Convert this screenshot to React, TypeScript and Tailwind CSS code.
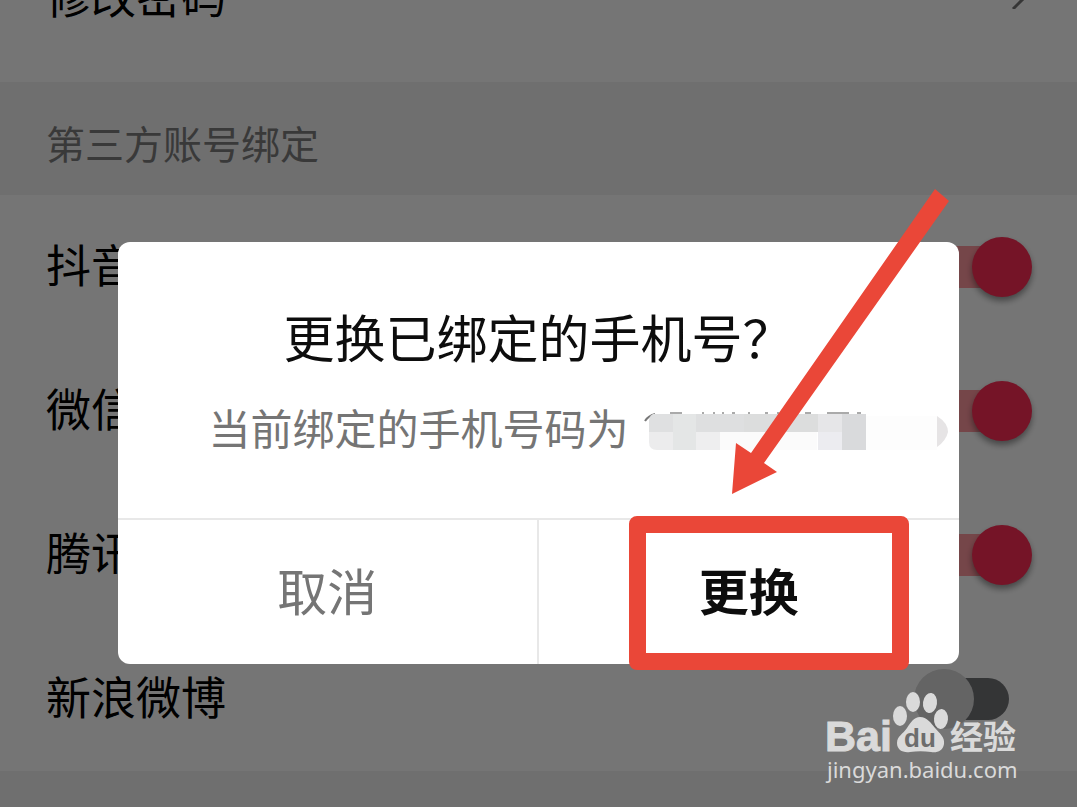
import { useState } from 'react';

// --- DATA ---
const accounts = [
  { id: 'douyin', name: '抖音', bound: true },
  { id: 'wechat', name: '微信', bound: true },
  { id: 'tencent', name: '腾讯', bound: true },
  { id: 'weibo', name: '新浪微博', bound: false },
];

// Pixelated blocks hiding the phone number
const MaskedNumber = () => (
  <svg className="w-[240px] h-[42px] overflow-visible shrink-0" viewBox="2 -3 240 42" aria-hidden="true">
    <path d="M18 12Q21 7 28 5" stroke="#777" strokeWidth="2" fill="none" />
    <path d="M43 4h12 M75 4h2 M86 4h2 M95 4h2 M105 4h3 M121 4h2 M138 4h3 M150 4h2 M163 4h3 M178 4h6 M200 4h22 M230 4h4" stroke="#aaa" strokeWidth="2" fill="none" />
    <path d="M26 5H46V23H22V12Q22 7 26 5Z" fill="#dfe0e1" />
    <path d="M22 23H46V41H30Q22 41 22 33Z" fill="#ececed" />
    <rect x="46" y="5" width="23" height="36" fill="#e4e6e6" />
    <rect x="69" y="5" width="48" height="18" fill="#dedfe0" />
    <rect x="69" y="23" width="24" height="18" fill="#eeeeef" />
    <rect x="93" y="23" width="97" height="18" fill="#fbfbfb" />
    <rect x="117" y="5" width="75" height="18" fill="#dcdddd" />
    <rect x="191" y="5" width="24" height="18" fill="#e6e6e8" />
    <rect x="191" y="23" width="24" height="18" fill="#ececf0" />
    <rect x="215" y="5" width="24" height="36" fill="#d9dadc" />
    <rect x="239" y="7" width="71" height="34" fill="#fdfdfd" />
    <path d="M310 7Q321 14 321 23Q319 32 310 38Z" fill="#e6e4e5" />
  </svg>
);

const Watermark = () => (
  <div className="absolute left-[827px] top-[688px] text-[#dadada]">
    <svg width="200" height="66" viewBox="0 0 200 66" fill="currentColor" className="block overflow-visible">
      <text x="-2" y="63" fontSize="43" fontWeight="700" stroke="currentColor" strokeWidth="1" fontFamily="'Liberation Sans', Arial, sans-serif">Bai</text>
      <ellipse cx="73" cy="28" rx="7" ry="10" />
      <ellipse cx="86" cy="14" rx="7" ry="10" />
      <ellipse cx="103" cy="15" rx="7" ry="10" transform="rotate(8 103 15)" />
      <ellipse cx="114" cy="31" rx="7" ry="10" transform="rotate(5 114 31)" />
      <path d="M93 29C100 29 104 35 108 40C113 46 118 49 117 56C116 63 110 65 104 64C97 63 90 63 83 64C76 65 70 62 70 55C70 48 76 46 80 40C84 34 87 29 93 29Z" />
      <text x="77" y="59" fontSize="26" fontWeight="700" fill="#6d6d6d" fontFamily="'Liberation Sans', Arial, sans-serif">du</text>
      <text x="123" y="61" fontSize="33" fontWeight="700" fontFamily="'Noto Sans CJK SC', sans-serif">经验</text>
    </svg>
    <p className="font-['Noto_Sans'] text-[22px] leading-[30px]">jingyan.baidu.com</p>
  </div>
);

const App = () => {
  const [bound, setBound] = useState(accounts.map((account) => account.bound));

  const toggle = (index: number) => {
    setBound(bound.map((value, i) => (i === index ? !value : value)));
  };

  return (
    <div className="relative h-screen overflow-hidden bg-[#f1f1f1] font-['Noto_Sans_CJK_SC',sans-serif] text-black">

      {/* SETTINGS PAGE */}
      <a href="#password" className="-mt-[86px] flex h-[168px] items-center justify-between bg-white pb-1.5 pl-[46px] pr-12 text-[45px]">
        <span>修改密码</span>
        <svg width="18" height="28" viewBox="0 0 18 28" fill="none" stroke="#777" strokeWidth="3" aria-hidden="true">
          <path d="M2 0L16 14L2 28" />
        </svg>
      </a>

      <h2 className="flex h-[113px] items-center px-[46px] pt-2 text-[39px] text-[#7d7d7d]">第三方账号绑定</h2>

      <div className="bg-white">
        {accounts.map((account, index) => (
          <label key={account.id} className="flex h-36 items-center justify-between pl-[46px] pr-[45px] text-[45px]">
            <span className="pb-1.5">{account.name}</span>
            <input
              type="checkbox"
              checked={bound[index]}
              onChange={() => toggle(index)}
              className="relative h-[60px] w-[118px] appearance-none before:absolute before:inset-y-[9px] before:inset-x-[23px] before:rounded-full before:bg-[#717377] after:absolute after:left-0 after:top-0 after:size-[60px] after:rounded-full after:bg-[#d9d9d9] checked:before:bg-[#ff98a0] checked:after:left-[58px] checked:after:bg-[#fe2c55] checked:after:shadow-[0_4px_6px_rgba(0,0,0,0.4)]"
            />
          </label>
        ))}
      </div>

      {/* DIALOG */}
      <div className="absolute inset-0 bg-black/54 px-[118px] pt-[242px] text-[#0d0d0d]">
        <div role="dialog" aria-labelledby="dialog-title" className="rounded-xl bg-white">
          <div className="flex flex-col items-center gap-4 border-b-2 border-[#e8e8e8] pb-[49px] pt-[61px]">
            <h1 id="dialog-title" className="text-[51px] leading-[66px]">更换已绑定的手机号？</h1>
            <p className="flex items-center justify-center whitespace-nowrap text-[42px] leading-[84px] text-[#757575]">
              当前绑定的手机号码为
              <MaskedNumber />
            </p>
          </div>
          <div className="grid h-36 grid-cols-2 text-[50px]">
            <button type="button" className="border-r-2 border-[#e8e8e8] pb-1.5 text-[#757575]">取消</button>
            <button type="button" className="relative pb-1.5 font-bold">
              更换
              <span className="absolute -bottom-1.5 -top-1 left-[90px] right-[50px] rounded-lg border-[17px] border-[#ea4738]"></span>
            </button>
          </div>
        </div>
      </div>

      {/* ARROW */}
      <svg className="absolute left-[732px] top-[189px]" width="217" height="305" viewBox="0 0 217 305" aria-hidden="true">
        <path d="M203 0L217 12L32 274L45 283L0 305L4 254L19 264Z" fill="#ea4738" />
      </svg>

      <Watermark />
    </div>
  );
};

export default App;
